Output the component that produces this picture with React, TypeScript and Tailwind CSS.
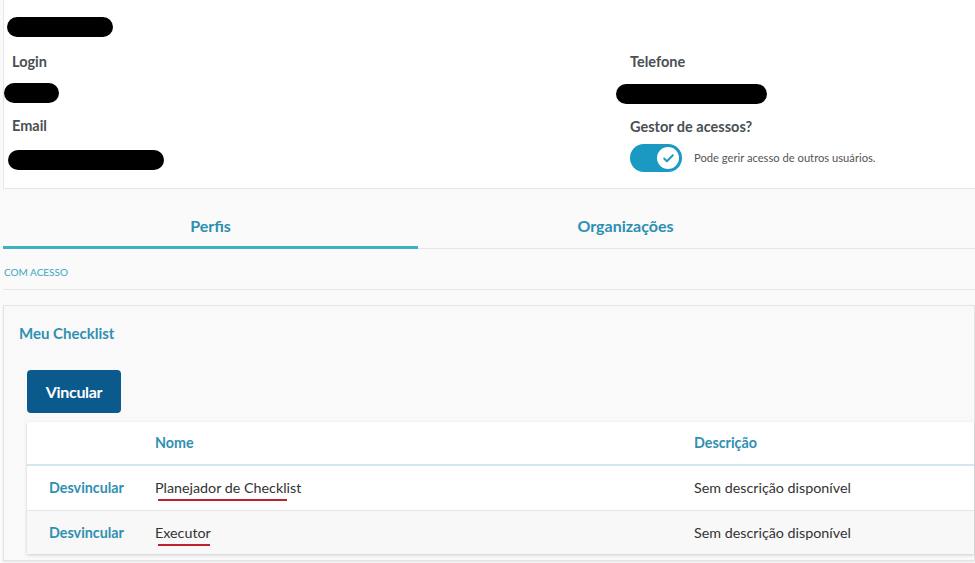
import { Check } from "lucide-react";

const rows = [
  { nome: "Planejador de Checklist", mark: 129 },
  { nome: "Executor", mark: 52 },
];

function Pill({ w, className = "" }: { w: string; className?: string }) {
  return <div className={`h-5 rounded-full bg-black ${w} ${className}`} />;
}

export default function App() {
  return (
    <div className="min-h-[563px] w-[975px] overflow-hidden bg-[#fafafa] font-['Lato',sans-serif]">
      {/* dados do usuário */}
      <div className="ml-[3px] flex border-b border-l border-[#e6e6e6] bg-white">
        <div className="w-[612px] pb-[18px]">
          <Pill w="w-[106px]" className="ml-[3px] mt-[17px]" />
          <div className="ml-2 mt-[15px] text-[14.5px] font-bold leading-5 text-[#4a4f52]">Login</div>
          <Pill w="w-[55px]" className="mt-[11px]" />
          <div className="ml-2 mt-[13px] text-[14.5px] font-bold leading-5 text-[#4a4f52]">Email</div>
          <Pill w="w-[156px]" className="ml-1 mt-[14px]" />
        </div>
        <div className="flex-1">
          <div className="ml-[14px] mt-[52px] text-[14.5px] font-bold leading-5 text-[#4a4f52]">Telefone</div>
          <Pill w="w-[151px]" className="mt-[12px]" />
          <div className="ml-[14px] mt-[13px] text-[14.5px] font-bold leading-5 text-[#4a4f52]">Gestor de acessos?</div>
          <div className="ml-[14px] mt-[7px] flex items-center gap-3">
            <div className="flex h-7 w-[52px] items-center justify-end rounded-full bg-[#1a9ac2] pr-[3px]">
              <div className="flex h-[22px] w-[22px] items-center justify-center rounded-full bg-white">
                <Check className="h-[13px] w-[13px] text-[#1a9ac2]" strokeWidth={3.5} />
              </div>
            </div>
            <span className="text-[11.2px] text-[#555]">Pode gerir acesso de outros usuários.</span>
          </div>
        </div>
      </div>

      {/* abas */}
      <nav className="ml-[3px] mt-[16px] flex border-b border-[#e6e6e6]">
        <button className="-mb-px flex h-[44px] w-[415px] items-center justify-center border-b-[3px] border-[#3bb3c3] pt-px text-[16px] font-bold text-[#2b8fb2]">
          Perfis
        </button>
        <button className="-mb-px flex h-[44px] w-[415px] items-center justify-center border-b-[3px] border-transparent pt-px text-[16px] font-bold text-[#2b8fb2]">
          Organizações
        </button>
      </nav>

      <div className="ml-[3px] border-b border-[#e6e6e6] pb-[10px] pl-px pt-[16px] text-[10px] leading-[14px] text-[#3aa6bd]">
        COM ACESSO
      </div>

      {/* perfil */}
      <div className="ml-[3px] mt-[15px] border border-[#e3e3e3] bg-[#f9f9f9] pb-[6px] shadow-[0_1px_2px_rgba(0,0,0,0.08)]">
        <div className="pl-[15px] pt-[17px] text-[15px] font-bold leading-5 text-[#2f90b2]">Meu Checklist</div>
        <button className="ml-[23px] mt-[27px] h-[43px] w-[94px] rounded bg-[#0b5a8e] text-base font-bold tracking-[-0.3px] text-white">
          Vincular
        </button>
        <div className="ml-[23px] mt-[9px] bg-white shadow-[0_1px_3px_rgba(0,0,0,0.18)]">
          <div className="flex h-[44px] items-center border-b-2 border-[#d3e7f0] text-[14.3px] font-bold text-[#2f90b2]">
            <div className="w-[128px]" />
            <div className="w-[539px]">Nome</div>
            <div>Descrição</div>
          </div>
          {rows.map((r, i) => (
            <div
              key={r.nome}
              className={`flex h-[44px] items-center text-[14.3px] ${i === 1 ? "border-t border-[#e6e6e6] bg-[#f8f8f8]" : "bg-white"}`}
            >
              <div className="w-[128px] pl-[22px] font-bold text-[#2f90b2]">Desvincular</div>
              <div className="w-[539px] text-[#333]">
                <span className="relative inline-block">
                  {r.nome}
                  <span
                    className="absolute left-[3px] top-[22px] h-[2px] bg-[#c0212b]"
                    style={{ width: r.mark }}
                  />
                </span>
              </div>
              <div className="text-[#333]">Sem descrição disponível</div>
            </div>
          ))}
        </div>
      </div>
    </div>
  );
}
